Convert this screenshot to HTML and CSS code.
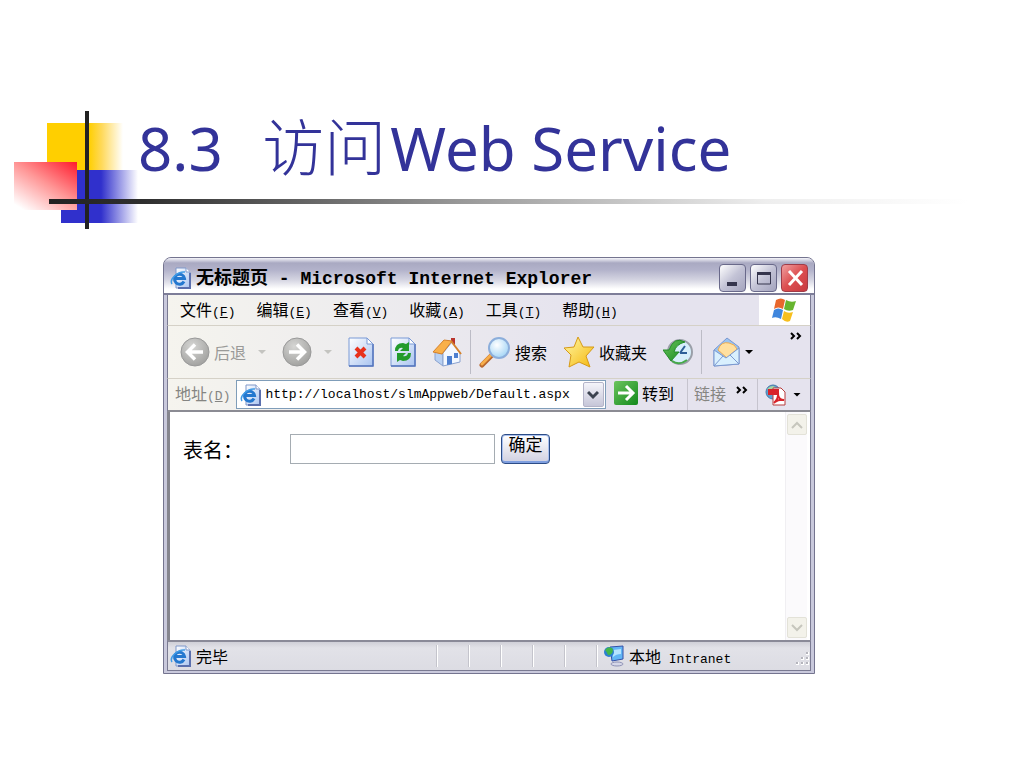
FILE: index.html
```
<!DOCTYPE html>
<html lang="zh-CN">
<head>
    <meta charset="UTF-8">
    <meta name="viewport" content="width=device-width, initial-scale=1.0">
    <title>8.3 访问Web Service</title>
    <link rel="stylesheet" href="styles.css">
</head>
<body>
    <svg class="defs" width="0" height="0" aria-hidden="true">
        <defs>
            <linearGradient id="paper" x1="0" y1="0" x2="1" y2="1">
                <stop offset="0" stop-color="#ffffff"/>
                <stop offset="1" stop-color="#a9c4f0"/>
            </linearGradient>
            <radialGradient id="grayBall" cx="0.4" cy="0.3" r="0.7">
                <stop offset="0" stop-color="#d6d6d4"/>
                <stop offset="1" stop-color="#a3a3a1"/>
            </radialGradient>
            <linearGradient id="gold" x1="0" y1="0" x2="1" y2="1">
                <stop offset="0" stop-color="#fff9a8"/>
                <stop offset="1" stop-color="#f5b70c"/>
            </linearGradient>
            <linearGradient id="green" x1="0" y1="0" x2="1" y2="1">
                <stop offset="0" stop-color="#6cc45e"/>
                <stop offset="1" stop-color="#138a1c"/>
            </linearGradient>
            <radialGradient id="glass" cx="0.4" cy="0.35" r="0.7">
                <stop offset="0" stop-color="#ffffff"/>
                <stop offset="1" stop-color="#9fd3f5"/>
            </radialGradient>
            <symbol id="ie" viewBox="0 0 22 22">
                <path d="M6 1h10l4 4v16H6z" fill="url(#paper)" stroke="#7f97c9"/>
                <path d="M20 6v15H8" fill="none" stroke="#5a6fae" stroke-width="2"/>
                <path d="M16 1v4h4" fill="#fff" stroke="#7f97c9"/>
                <path d="M14 14.500A5 5 0 1 1 14.500 11.500H5" fill="none" stroke="#2478cf" stroke-width="3"/>
                <path d="M2 17C-1 12 8 4 15 5" fill="none" stroke="#3f9be6" stroke-width="1.500"/>
            </symbol>
        </defs>
    </svg>

    <main class="slide">
        <header class="slide-header">
            <svg class="blocks" width="130" height="122" viewBox="0 0 130 122" aria-hidden="true">
                <defs>
                    <linearGradient id="fadeYellow">
                        <stop offset="0.550" stop-color="#ffcf00"/>
                        <stop offset="0.720" stop-color="#ffd95a"/>
                        <stop offset="1" stop-color="#ffffff"/>
                    </linearGradient>
                    <linearGradient id="fadeBlue">
                        <stop offset="0.520" stop-color="#3030cc"/>
                        <stop offset="1" stop-color="#ffffff"/>
                    </linearGradient>
                    <linearGradient id="fadeRed" x1="1" y1="0" x2="0.150" y2="1">
                        <stop offset="0" stop-color="#ff1a2c"/>
                        <stop offset="0.500" stop-color="#ff9696"/>
                        <stop offset="1" stop-color="#ffffff"/>
                    </linearGradient>
                </defs>
                <rect x="33" y="13" width="76" height="47" fill="url(#fadeYellow)"/>
                <rect x="47" y="60" width="77" height="53" fill="url(#fadeBlue)"/>
                <rect x="0" y="52" width="63" height="48" fill="url(#fadeRed)"/>
                <rect x="71" y="1" width="4" height="118" fill="#222222"/>
            </svg>
            <h1>8.3 <span class="hanzi">访问</span>Web Service</h1>
            <div class="rule"></div>
        </header>

        <section class="window">
            <div class="titlebar">
                <svg width="22" height="22"><use href="#ie"/></svg>
                <span class="window-title">无标题页 - Microsoft Internet Explorer</span>
                <button class="win-btn" type="button" aria-label="最小化">
                    <svg width="22" height="22" viewBox="0 0 22 22"><path d="M5 15h10v4H5z" fill="#35354d"/></svg>
                </button>
                <button class="win-btn" type="button" aria-label="最大化">
                    <svg width="22" height="22" viewBox="0 0 22 22"><path d="M4 5h14v3H4z" fill="#35354d"/><path d="M4.500 6h13v11h-13z" fill="none" stroke="#35354d"/></svg>
                </button>
                <button class="win-btn close" type="button" aria-label="关闭">
                    <svg width="22" height="22" viewBox="0 0 22 22"><path d="M5 4l13 14M18 4L5 18" stroke="#fff" stroke-width="3"/></svg>
                </button>
            </div>

            <nav class="menubar">
                <button type="button">文件<span>(<u>F</u>)</span></button>
                <button type="button">编辑<span>(<u>E</u>)</span></button>
                <button type="button">查看<span>(<u>V</u>)</span></button>
                <button type="button">收藏<span>(<u>A</u>)</span></button>
                <button type="button">工具<span>(<u>T</u>)</span></button>
                <button type="button">帮助<span>(<u>H</u>)</span></button>
                <div class="flag">
                    <svg width="28" height="26" viewBox="0 0 28 26">
                        <path d="M5 3q5-3 9 0l-2 9q-5-3-9 0z" fill="#e8672c"/>
                        <path d="M15 3q5 3 10 1l-3 9q-5 2-9-1z" fill="#67b52f"/>
                        <path d="M3 13q4-3 9 0l-2 9q-5-3-9-1z" fill="#3f86dd"/>
                        <path d="M13 14q4 3 9 1l-3 9q-4 2-8-2z" fill="#f7bf1e"/>
                    </svg>
                </div>
            </nav>

            <div class="toolbar">
                <div class="tool-group">
                    <button class="tool disabled" type="button">
                        <svg width="30" height="30" viewBox="0 0 30 30">
                            <circle cx="15" cy="15" r="14" fill="url(#grayBall)" stroke="#999"/>
                            <path d="M23 15H8M15 7.500L7.500 15l7.500 7.500" fill="none" stroke="#fff" stroke-width="3.500"/>
                        </svg>
                        后退
                    </button>
                    <button class="caret disabled" type="button" aria-label="后退列表"></button>
                </div>
                <div class="tool-group">
                    <button class="tool disabled" type="button" aria-label="前进">
                        <svg width="30" height="30" viewBox="0 0 30 30">
                            <circle cx="15" cy="15" r="14" fill="url(#grayBall)" stroke="#999"/>
                            <path d="M7 15h15M15 7.500l7.500 7.500-7.500 7.500" fill="none" stroke="#fff" stroke-width="3.500"/>
                        </svg>
                    </button>
                    <button class="caret disabled" type="button" aria-label="前进列表"></button>
                </div>
                <button class="tool" type="button" aria-label="停止">
                    <svg width="26" height="30" viewBox="0 0 26 30">
                        <path d="M1 1h18l6 6v22H1z" fill="url(#paper)" stroke="#7b9ad6"/>
                        <path d="M25 7v22H1" fill="none" stroke="#5575bd" stroke-width="1.500"/>
                        <path d="M19 1v6h6z" fill="#fff" stroke="#7b9ad6"/>
                        <path d="M8 11l9 9M17 11l-9 9" stroke="#e8321c" stroke-width="4"/>
                    </svg>
                </button>
                <button class="tool" type="button" aria-label="刷新">
                    <svg width="26" height="30" viewBox="0 0 26 30">
                        <path d="M1 1h18l6 6v22H1z" fill="url(#paper)" stroke="#7b9ad6"/>
                        <path d="M25 7v22H1" fill="none" stroke="#5575bd" stroke-width="1.500"/>
                        <path d="M19 1v6h6z" fill="#fff" stroke="#7b9ad6"/>
                        <path d="M5 14q0-8 8-8l3 1 3-2v9h-9l3-3q-4-1-5 3z" fill="#239b2d"/>
                        <path d="M21 16q0 8-8 8l-3-1-3 2v-9h9l-3 3q4 1 5-3z" fill="#239b2d"/>
                    </svg>
                </button>
                <button class="tool" type="button" aria-label="主页">
                    <svg width="30" height="30" viewBox="0 0 30 30">
                        <path d="M19 1h4v9h-4z" fill="#b9342c"/>
                        <path d="M3 15l8 2v12l-8-6z" fill="#b8d0f2" stroke="#8aa2cf"/>
                        <path d="M11 16l9-11 8 11v9l-17 4z" fill="#f3f8ff" stroke="#8aa2cf"/>
                        <path d="M1 15L12 3l8 1-10 13z" fill="#f9b04a" stroke="#d5812b"/>
                        <path d="M19 4l10 13" stroke="#d5812b" stroke-width="2"/>
                        <path d="M15 19h5v8l-5 1z" fill="#4d7fd0"/>
                        <path d="M22 16h4v5h-4z" fill="#4d7fd0"/>
                    </svg>
                </button>
                <div class="divider"></div>
                <button class="tool" type="button">
                    <svg width="32" height="32" viewBox="0 0 32 32">
                        <path d="M13 19L3 29" stroke="#b8672e" stroke-width="5" stroke-linecap="round"/>
                        <path d="M13 18L3 28" stroke="#f7ae4b" stroke-width="3" stroke-linecap="round"/>
                        <circle cx="20" cy="12" r="10" fill="url(#glass)" stroke="#8caedb" stroke-width="2"/>
                    </svg>
                    搜索
                </button>
                <button class="tool" type="button">
                    <svg width="32" height="32" viewBox="0 0 32 32">
                        <path d="M15 1l5 10 11 0-8 9 4 11-11-5-10 5 2-12-7-7 10-1z" fill="url(#gold)" stroke="#d69a17" stroke-linejoin="round"/>
                    </svg>
                    收藏夹
                </button>
                <button class="tool" type="button" aria-label="历史">
                    <svg width="30" height="30" viewBox="0 0 30 30">
                        <circle cx="17" cy="15" r="12" fill="#d7effb" stroke="#9a9fa8" stroke-width="2"/>
                        <path d="M17 16l5-7M17 16h7" stroke="#2d5f97" stroke-width="2"/>
                        <path d="M22 5Q11-1 6 13H0l8 11 8-9h-5q2-8 11-10z" fill="url(#green)" stroke="#258c2a"/>
                        <path d="M9 24q7 5 15-1" fill="none" stroke="#45aa49" stroke-width="2"/>
                    </svg>
                </button>
                <div class="divider"></div>
                <div class="tool-group mail">
                    <button class="tool" type="button" aria-label="邮件">
                        <svg width="28" height="30" viewBox="0 0 28 30">
                            <path d="M1 13L14 1l12 9v17L1 29z" fill="#9bc4f1" stroke="#7b98d0"/>
                            <path d="M5 13q3-9 11-7 6 1 8 6l-10 9z" fill="#ffe0a0" stroke="#edac50"/>
                            <path d="M1 13l12 8 13-10v16L1 29z" fill="#d9f0fe" stroke="#7b98d0"/>
                            <path d="M1 29l9-10M26 27l-9-9" stroke="#7b98d0"/>
                        </svg>
                    </button>
                    <button class="caret" type="button" aria-label="邮件列表"></button>
                </div>
                <button class="more" type="button" aria-label="更多工具">
                    <svg width="12" height="8" viewBox="0 0 12 8"><path d="M1 1l3 3-3 3M7 1l3 3-3 3" fill="none" stroke="#000" stroke-width="2"/></svg>
                </button>
            </div>

            <div class="addressbar">
                <label for="address">地址<span>(<u>D</u>)</span></label>
                <div class="address-box">
                    <svg width="22" height="22"><use href="#ie"/></svg>
                    <input id="address" type="text" value="http://localhost/slmAppweb/Default.aspx">
                    <button type="button" aria-label="地址列表">
                        <svg width="12" height="10" viewBox="0 0 12 10"><path d="M1 2l5 5 5-5" fill="none" stroke="#3c4350" stroke-width="3"/></svg>
                    </button>
                </div>
                <button class="go" type="button">
                    <svg width="24" height="24" viewBox="0 0 24 24">
                        <rect width="24" height="24" rx="2" fill="url(#green)"/>
                        <path d="M4 12h14M12 5l7 7-7 7" fill="none" stroke="#fff" stroke-width="3"/>
                    </svg>
                    转到
                </button>
                <div class="segment links">
                    <span>链接</span>
                    <button class="more" type="button" aria-label="更多链接">
                        <svg width="12" height="8" viewBox="0 0 12 8"><path d="M1 1l3 3-3 3M7 1l3 3-3 3" fill="none" stroke="#000" stroke-width="2"/></svg>
                    </button>
                </div>
                <div class="segment">
                    <button class="tool" type="button" aria-label="PDF">
                        <svg width="22" height="22" viewBox="0 0 22 22">
                            <circle cx="9" cy="8" r="7" fill="#5c9fd0" stroke="#477ba8"/>
                            <path d="M3 5q5-5 8-2-2 4-8 2z" fill="#a8d5a2"/>
                            <path d="M9 4h8l4 4v13H9z" fill="#fff" stroke="#b83c3c"/>
                            <path d="M4 5h11v6H4z" fill="#d8232a"/>
                            <path d="M14 8q1 6-4 11M14 11q1 5 6 5-5-1-9 2" fill="none" stroke="#d8232a" stroke-width="2"/>
                        </svg>
                    </button>
                    <button class="caret" type="button" aria-label="PDF 列表"></button>
                </div>
            </div>

            <div class="page">
                <form class="page-form">
                    <label for="tableName">表名：</label>
                    <input id="tableName" type="text">
                    <button type="button">确定</button>
                </form>
                <div class="scrollbar">
                    <button type="button" aria-label="向上滚动">
                        <svg width="12" height="8" viewBox="0 0 12 8"><path d="M1 7l5-5 5 5" fill="none" stroke="#c6c6bd" stroke-width="2"/></svg>
                    </button>
                    <button type="button" aria-label="向下滚动">
                        <svg width="12" height="8" viewBox="0 0 12 8"><path d="M1 1l5 5 5-5" fill="none" stroke="#c6c6bd" stroke-width="2"/></svg>
                    </button>
                </div>
            </div>

            <footer class="statusbar">
                <div class="status-text">
                    <svg width="22" height="22"><use href="#ie"/></svg>
                    完毕
                </div>
                <div class="pane"></div>
                <div class="pane"></div>
                <div class="pane"></div>
                <div class="pane"></div>
                <div class="pane"></div>
                <div class="zone">
                    <svg width="22" height="22" viewBox="0 0 22 22">
                        <ellipse cx="14" cy="19" rx="6" ry="2" fill="#d5d7e8" stroke="#8f92b5"/>
                        <path d="M7 2l13-1v13l-11 2z" fill="#62b5f5" stroke="#3450a8"/>
                        <path d="M10 5l8-1v5q-5 0-8 3z" fill="#b5e4ff"/>
                        <circle cx="6" cy="7" r="5" fill="#2b80d0"/>
                        <path d="M2 5q4-5 8-1 0 6-5 6-1-3-3-5z" fill="#43b649"/>
                    </svg>
                    <span>本地<span class="latin"> Intranet</span></span>
                    <svg class="grip" width="16" height="16" viewBox="0 0 16 16">
                        <path d="M12 1h3v3h-3zM12 6h3v3h-3zM7 6h3v3H7zM12 11h3v3h-3zM7 11h3v3H7zM2 11h3v3H2z" fill="#fff"/>
                        <path d="M12 1h2v2h-2zM12 6h2v2h-2zM7 6h2v2H7zM12 11h2v2h-2zM7 11h2v2H7zM2 11h2v2H2z" fill="#b4b4bc"/>
                    </svg>
                </div>
            </footer>
        </section>
    </main>
</body>
</html>
```
FILE: styles.css
```
* {
    box-sizing: border-box;
}
body {
    margin: 0;
    background-color: #fff;
    font-family: "Liberation Sans", "Noto Sans CJK SC", sans-serif;
    font-size: 16px;
    color: #000;
}
button, input {
    font: inherit;
    color: inherit;
    margin: 0;
    padding: 0;
    border: none;
    background: none;
}
svg {
    display: block;
    flex-shrink: 0;
}
.defs {
    position: absolute;
}
.slide {
    display: flex;
    flex-direction: column;
    min-height: 100vh;
    padding: 110px 0 94px;
}

/* slide heading */
.slide-header {
    position: relative;
    height: 147px;
    padding-left: 138px;
}
.blocks {
    position: absolute;
    left: 14px;
    top: 0;
}
.rule {
    position: absolute;
    left: 49px;
    right: 56px;
    top: 89px;
    height: 5px;
    background: linear-gradient(to right, #222 0%, #2e2e2e 10%, #999 45%, #eee 78%, #fff 100%);
}
h1 {
    margin: 0;
    font-family: "Noto Sans", "Noto Sans CJK SC", sans-serif;
    font-size: 60px;
    font-weight: 400;
    line-height: 68px;
    color: #333399;
    white-space: nowrap;
}
.hanzi {
    margin-left: 24px;
    margin-right: 4px;
    font-family: "Noto Sans CJK SC", sans-serif;
    font-size: 62px;
    font-weight: 300;
}

/* browser window */
.window {
    display: flex;
    flex-direction: column;
    flex: 1;
    margin: 0 209px 0 163px;
    padding: 0 3px 2px;
    border: 1px solid #74748f;
    border-radius: 8px 8px 0 0;
    background-color: #c9c9dc;
}
.titlebar {
    display: flex;
    align-items: center;
    gap: 4px;
    height: 37px;
    margin: 0 -3px;
    padding: 4px 6px 0;
    border-bottom: 2px solid #7d7d98;
    border-radius: 7px 7px 0 0;
    background: linear-gradient(to bottom, #f5f5fa 0, #a9a9c2 5px, #b3b3cb 12px, #d5d5e2 22px, #fff 31px, #fff 100%);
}
.window-title {
    flex: 1;
    padding-bottom: 3px;
    font-family: "Liberation Mono", "Noto Sans CJK SC", monospace;
    font-size: 18px;
    font-weight: 700;
    white-space: nowrap;
}
.win-btn {
    display: grid;
    place-items: center;
    width: 27px;
    height: 28px;
    border: 1px solid #69698a;
    border-radius: 4px;
    background: linear-gradient(135deg, #fff, #c3c3d6 50%, #a4a4be);
}
.close {
    border-color: #a03c48;
    background: linear-gradient(135deg, #f0a0a0, #dc4e50 50%, #c83a40);
}
.menubar, .toolbar, .addressbar, .page, .statusbar {
    border-left: 1px solid #7a7a92;
    border-right: 1px solid #7a7a92;
}
.menubar, .toolbar, .addressbar {
    display: flex;
    align-items: center;
    background: linear-gradient(to right, #f5f4ee, #e5e3ee 65%);
    border-bottom: 1px solid #d5d1c7;
    white-space: nowrap;
}
.menubar {
    gap: 21px;
    height: 31px;
    padding-left: 12px;
}
.menubar button {
    padding-bottom: 2px;
}
.menubar span, .addressbar label span, .latin {
    font-family: "Liberation Mono", monospace;
    font-size: 13px;
}
.flag {
    display: grid;
    place-items: center;
    align-self: stretch;
    width: 51px;
    margin-left: auto;
    background-color: #fff;
}
.toolbar {
    gap: 16px;
    height: 53px;
    padding: 0 8px 0 12px;
}
.tool, .go {
    display: flex;
    align-items: center;
    gap: 4px;
}
.tool-group {
    display: flex;
    align-items: center;
    gap: 12px;
}
.mail {
    gap: 4px;
    padding-left: 3px;
}
.disabled {
    color: #9a9a98;
}
.caret {
    width: 8px;
    height: 4px;
    background-color: #000;
    clip-path: polygon(0 0, 100% 0, 50% 100%);
}
.caret.disabled {
    background-color: #c4c4c0;
}
.divider {
    align-self: stretch;
    width: 1px;
    margin: 4px -8px;
    background-color: #bcbcc6;
}
.toolbar .more {
    align-self: flex-start;
    margin-left: auto;
    padding-top: 6px;
}
.addressbar {
    height: 33px;
    padding: 0 3px 0 7px;
    border-bottom: 2px solid #8b8b93;
}
.addressbar label, .links {
    color: #858582;
}
.addressbar label, .go, .links span {
    padding-bottom: 3px;
}
.address-box {
    display: flex;
    align-items: center;
    flex: 1;
    min-width: 0;
    height: 29px;
    margin: 0 8px 0 6px;
    padding: 0 1px 0 3px;
    border: 1px solid #7f9db9;
    background-color: #fff;
}
.address-box input {
    flex: 1;
    min-width: 0;
    padding-left: 3px;
    font-family: "Liberation Mono", monospace;
    font-size: 13px;
}
.address-box button {
    display: grid;
    place-items: center;
    width: 21px;
    height: 25px;
    border: 1px solid #b4b4c8;
    border-radius: 2px;
    background: linear-gradient(to bottom, #f4f4fa, #c6c6d8);
}
.segment {
    display: flex;
    align-items: center;
    align-self: stretch;
    gap: 7px;
    padding: 0 6px;
    border-left: 1px solid #c6c4ce;
}
.links {
    gap: 10px;
    margin-left: 13px;
    padding-right: 9px;
}
.links .more {
    padding-bottom: 10px;
}

/* page shown in the browser */
.page {
    display: flex;
    flex: 1;
    border-left: 3px solid #85858e;
    background-color: #fff;
}
.page-form {
    display: flex;
    align-items: flex-start;
    flex: 1;
    padding: 22px 0 0 13px;
}
.page-form label {
    width: 107px;
    font-size: 20px;
    line-height: 34px;
}
.page-form input {
    width: 205px;
    height: 30px;
    margin-right: 6px;
    padding: 0 4px;
    border: 1px solid #a5acb2;
}
.page-form button {
    width: 49px;
    height: 30px;
    padding-bottom: 6px;
    border: 1px solid #2c4c86;
    border-radius: 4px;
    background: linear-gradient(to bottom, #fff, #cfcfe0);
    box-shadow: inset 0 -2px 0 #7f9fe0, inset 0 0 0 1px #a9c0ee;
    font-size: 17px;
    line-height: 20px;
}
.scrollbar {
    display: flex;
    flex-direction: column;
    justify-content: space-between;
    width: 22px;
    margin-right: 3px;
    padding: 2px 0 2px 1px;
    border-left: 1px solid #f0eff2;
    background-color: #fbfafc;
}
.scrollbar button {
    display: grid;
    place-items: center;
    width: 20px;
    height: 21px;
    border: 1px solid #e3e2d8;
    border-radius: 2px;
    background-color: #f3f2ea;
}
.statusbar {
    display: flex;
    align-items: center;
    height: 31px;
    border-top: 2px solid #8a8a98;
    border-bottom: 1px solid #7a7a92;
    background: linear-gradient(to bottom, #d0d0d8, #e2e2e8 6px, #dcdce3);
    white-space: nowrap;
}
.status-text {
    display: flex;
    align-items: center;
    flex: 1;
    gap: 4px;
    padding-left: 2px;
}
.pane, .zone {
    height: 22px;
    border-left: 1px solid #fff;
    box-shadow: -1px 0 0 #c4c4cc;
}
.pane {
    width: 32px;
}
.zone {
    display: flex;
    align-items: center;
    gap: 4px;
    width: 213px;
    padding-left: 5px;
}
.grip {
    align-self: flex-end;
    margin-left: auto;
}
```
